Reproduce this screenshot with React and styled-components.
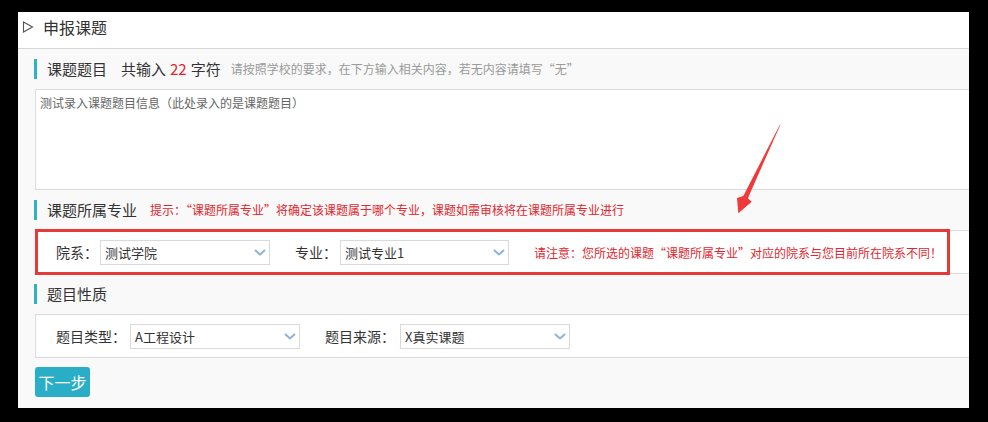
import React from 'react';
import styled, { createGlobalStyle } from 'styled-components';

const GlobalStyle = createGlobalStyle`
  html, body {
    margin: 0;
    padding: 0;
    background: #000;
  }
  body {
    font-family: "Noto Sans CJK SC", "Noto Sans", sans-serif;
  }
`;

const Panel = styled.div`
  position: relative;
  margin: 12px 0 0 18px;
  width: 951px;
  height: 396px;
  background: #f9f9f9;
  overflow: hidden;
`;

const Header = styled.div`
  height: 37px;
  box-sizing: border-box;
  background: #fff;
  border-bottom: 1px solid #d6d6d6;
  display: flex;
  align-items: center;
  padding: 0 0 6px 4px;
  gap: 9px;
  font-size: 16px;
  color: #333;
  line-height: 20px;
`;

const Content = styled.div`
  padding-left: 16px;
`;

const SectionTitle = styled.div`
  margin: 10px 0;
  height: 20px;
  border-left: 3px solid #2eb3c1;
  padding-left: 10px;
  display: flex;
  align-items: center;
  font-size: 15px;
  line-height: 20px;
  color: #333;
  white-space: nowrap;
`;

const Count = styled.span`
  margin-left: 14px;
  em {
    font-style: normal;
    color: #e2222a;
    margin: 0 4px;
  }
`;

const Hint = styled.span`
  margin-left: ${(p) => p.$gap || 13}px;
  font-size: 12px;
  color: ${(p) => (p.$red ? '#e3262e' : '#9a9a9a')};
`;

const TextArea = styled.textarea`
  display: block;
  margin: 0 0 0 1px;
  width: calc(100% - 1px);
  height: 101px;
  box-sizing: border-box;
  border: 1px solid #dcdcdc;
  border-right: none;
  background: #fff;
  padding: 5px 4px;
  font-family: inherit;
  font-size: 12px;
  line-height: 16px;
  color: #666;
  resize: none;
  outline: none;
`;

const Row = styled.div`
  position: relative;
  margin-left: 1px;
  height: 44px;
  box-sizing: border-box;
  background: #fff;
  border: 1px solid #dcdcdc;
  border-right: none;
  display: flex;
  align-items: center;
  padding-left: 20px;
  gap: 25px;
  white-space: nowrap;

  ${(p) =>
    p.$marked &&
    `
    &::after {
      content: '';
      position: absolute;
      left: -1px;
      right: 19px;
      top: -2px;
      bottom: -2px;
      border: 3px solid #e63a3a;
      pointer-events: none;
    }
  `}
`;

const Field = styled.div`
  display: flex;
  align-items: center;
`;

const Label = styled.span`
  font-size: 14px;
  color: #333;
  margin-right: ${(p) => p.$gap || 2}px;
`;

const SelectBox = styled.div`
  width: ${(p) => p.$width || 170}px;
  height: 25px;
  box-sizing: border-box;
  border: 1px solid #d9d9d9;
  background: #fff;
  display: flex;
  align-items: center;
  justify-content: space-between;
  padding: 0 3px 0 4px;
  font-size: 13px;
  color: #333;
`;

const Note = styled.span`
  font-size: 12px;
  color: #e3262e;
`;

const NextButton = styled.button`
  margin: 9px 0 0 1px;
  width: 55px;
  height: 30px;
  border: none;
  border-radius: 3px;
  background: #2aaec7;
  color: #fff;
  font-family: inherit;
  font-size: 16px;
  padding: 0;
  cursor: pointer;
`;

const Arrow = styled.svg`
  position: absolute;
  left: 702px;
  top: 103px;
  width: 80px;
  height: 110px;
  pointer-events: none;
`;

const Chevron = () => (
  <svg width="12" height="7" viewBox="0 0 12 7">
    <path d="M1 1 L6 5.5 L11 1" fill="none" stroke="#8ab4d9" strokeWidth="2" />
  </svg>
);

const Select = ({ value, width }) => (
  <SelectBox $width={width}>
    <span>{value}</span>
    <Chevron />
  </SelectBox>
);

const App = () => (
  <>
    <GlobalStyle />
    <Panel>
      <Header>
        <svg width="12" height="12" viewBox="0 0 12 12">
          <path d="M1.5 1 L10.5 6 L1.5 11 Z" fill="none" stroke="#555" strokeWidth="1.1" />
        </svg>
        <span>申报课题</span>
      </Header>
      <Content>
        <SectionTitle>
          课题题目
          <Count>
            共输入<em>22</em>字符
          </Count>
          <Hint $gap={10}>请按照学校的要求，在下方输入相关内容，若无内容请填写“无”</Hint>
        </SectionTitle>
        <TextArea defaultValue="测试录入课题题目信息（此处录入的是课题题目）" />

        <SectionTitle>
          课题所属专业
          <Hint $red $gap={13}>
            提示：“课题所属专业”将确定该课题属于哪个专业，课题如需审核将在课题所属专业进行
          </Hint>
        </SectionTitle>
        <Row $marked>
          <Field>
            <Label>院系：</Label>
            <Select value="测试学院" />
          </Field>
          <Field>
            <Label $gap={3}>专业：</Label>
            <Select value="测试专业1" width={169} />
          </Field>
          <Note>请注意：您所选的课题“课题所属专业”对应的院系与您目前所在院系不同！</Note>
        </Row>

        <SectionTitle>题目性质</SectionTitle>
        <Row>
          <Field>
            <Label $gap={4}>题目类型：</Label>
            <Select value="A工程设计" />
          </Field>
          <Field>
            <Label $gap={5}>题目来源：</Label>
            <Select value="X真实课题" />
          </Field>
        </Row>

        <NextButton>下一步</NextButton>
      </Content>
      <Arrow viewBox="0 0 80 110">
        <polygon
          points="60.4,9.8 27.9,83.2 31.7,86.7 18.3,98.3 17,83 23.3,81 59.6,10.2"
          fill="#f03a3a"
        />
      </Arrow>
    </Panel>
  </>
);

export default App;
